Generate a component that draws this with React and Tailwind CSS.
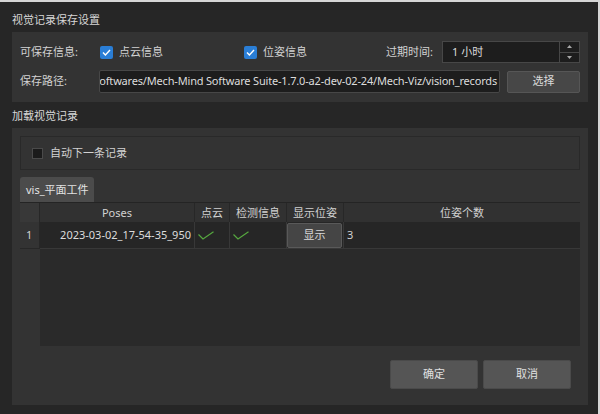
import React from "react";

const cols = [
  { key: "num", w: "w-[20px]" },
  { key: "poses", w: "w-[155px]" },
  { key: "cloud", w: "w-[35px]" },
  { key: "detect", w: "w-[57px]" },
  { key: "show", w: "w-[57px]" },
  { key: "count", w: "flex-1" },
];

function BlueCheck() {
  return (
    <span className="w-[13px] h-[13px] rounded-[2px] bg-[#2a7ed6] flex items-center justify-center shrink-0">
      <svg width="9" height="7" viewBox="0 0 9 7">
        <polyline points="1,3.6 3.4,6 8,1" fill="none" stroke="#fff" strokeWidth="1.4" />
      </svg>
    </span>
  );
}

function GreenTick() {
  return (
    <svg width="16" height="9" viewBox="0 0 16 9">
      <polyline points="0.5,3.5 5,8 15.5,0.8" fill="none" stroke="#56a83f" strokeWidth="1.2" />
    </svg>
  );
}

export default function App() {
  return (
    <div className="w-[600px] h-[414px] bg-[#262626] border-t-2 border-r-2 border-[#d6d6d6] pl-3 pr-[10px] text-[11px] text-[#d2d2d2] font-['Noto_Sans','Noto_Sans_CJK_SC',sans-serif] overflow-hidden">
      {/* 保存设置 */}
      <div className="h-[30px] pt-2 leading-[19px] text-[#d6d6d6]">视觉记录保存设置</div>
      <div className="h-[70px] bg-[#333333] px-2 pt-2 flex flex-col gap-[6px]">
        <div className="h-[24px] flex items-center">
          <span className="w-[80px]">可保存信息:</span>
          <div className="w-[144px] flex items-center gap-[6px]">
            <BlueCheck />
            <span>点云信息</span>
          </div>
          <div className="flex items-center gap-[6px]">
            <BlueCheck />
            <span>位姿信息</span>
          </div>
          <span className="ml-auto w-[56px]">过期时间:</span>
          <div className="w-[138px] h-[22px] bg-[#1d1d1d] border border-[#474747] flex">
            <span className="flex-1 pl-[9px] leading-[20px] text-[#dcdcdc]">1 小时</span>
            <div className="w-[20px] border-l border-[#474747] flex flex-col">
              <div className="flex-1 flex items-center justify-center border-b border-[#474747]">
                <svg width="5" height="3" viewBox="0 0 5 3">
                  <polygon points="0,3 2.5,0 5,3" fill="#a8a8a8" />
                </svg>
              </div>
              <div className="flex-1 flex items-center justify-center">
                <svg width="5" height="3" viewBox="0 0 5 3">
                  <polygon points="0,0 2.5,3 5,0" fill="#a8a8a8" />
                </svg>
              </div>
            </div>
          </div>
        </div>
        <div className="h-[23px] flex items-center">
          <span className="w-[79px]">保存路径:</span>
          <div className="w-[401px] h-[23px] bg-[#1d1d1d] border border-[#474747] rounded-[2px] flex justify-end items-center overflow-hidden pr-[2px]">
            <span className="whitespace-nowrap tracking-[-0.18px] text-[#dcdcdc]">
              D:/Softwares/Mech-Mind Software Suite-1.7.0-a2-dev-02-24/Mech-Viz/vision_records
            </span>
          </div>
          <button className="ml-[7px] w-[73px] h-[22px] bg-[#474747] border border-[#565656] rounded-[2px] text-[#dadada]">
            选择
          </button>
        </div>
      </div>

      {/* 加载记录 */}
      <div className="h-[26px] pt-1 leading-[19px] text-[#d6d6d6]">加载视觉记录</div>
      <div className="h-[277px] bg-[#333333] px-2 pt-2 flex flex-col">
        <div className="h-[34px] border border-[#292929] flex items-center pl-[11px]">
          <span className="w-[11px] h-[11px] bg-[#1b1b1b] border border-[#4a4a4a]" />
          <span className="ml-[7px]">自动下一条记录</span>
        </div>
        <div className="mt-[7px] h-[25px] flex">
          <div className="w-[74px] bg-[#4b4b4b] rounded-t-[3px] pl-[6px] leading-[25px] text-[#e2e2e2]">
            vis_平面工件
          </div>
        </div>
        <div className="h-[144px] border-t border-[#242424] flex flex-col">
          <div className="h-[19px] flex bg-[#313131] text-center leading-[19px]">
            <div className={`${cols[0].w} bg-[#383838] border-r border-[#272727]`} />
            <div className={`${cols[1].w} border-r border-[#272727]`}>Poses</div>
            <div className={`${cols[2].w} border-r border-[#272727]`}>点云</div>
            <div className={`${cols[3].w} border-r border-[#272727]`}>检测信息</div>
            <div className={`${cols[4].w} border-r border-[#272727]`}>显示位姿</div>
            <div className={cols[5].w}>位姿个数</div>
          </div>
          <div className="h-[27px] flex">
            <div className={`${cols[0].w} bg-[#333333] border-r border-b border-[#272727] pl-[6px] leading-[26px]`}>1</div>
            <div className={`${cols[1].w} bg-[#262626] border-r border-b border-[#383838] text-right pr-[3px] leading-[26px] text-[#dcdcdc]`}>
              2023-03-02_17-54-35_950
            </div>
            <div className={`${cols[2].w} bg-[#262626] border-r border-b border-[#383838] pl-[3px] pt-[9px]`}>
              <GreenTick />
            </div>
            <div className={`${cols[3].w} bg-[#262626] border-r border-b border-[#383838] pl-[3px] pt-[9px]`}>
              <GreenTick />
            </div>
            <div className={`${cols[4].w} bg-[#262626] border-r border-b border-[#383838] flex items-start`}>
              <button className="mt-px w-[55px] h-[25px] bg-[#454545] border border-[#595959] rounded-[2px] text-[#dadada]">
                显示
              </button>
            </div>
            <div className={`${cols[5].w} bg-[#262626] border-b border-[#383838] pl-[3px] leading-[26px]`}>3</div>
          </div>
          <div className="flex-1 flex">
            <div className="w-[20px]" />
            <div className="flex-1 bg-[#2a2a2a]" />
          </div>
        </div>
        <div className="mt-[14px] flex justify-end gap-[5px] pr-[9px]">
          <button className="w-[88px] h-[29px] bg-[#555555] border border-[#4a4a4a] rounded-[2px] text-[#e0e0e0]">
            确定
          </button>
          <button className="w-[88px] h-[29px] bg-[#555555] border border-[#4a4a4a] rounded-[2px] text-[#e0e0e0]">
            取消
          </button>
        </div>
      </div>
    </div>
  );
}
